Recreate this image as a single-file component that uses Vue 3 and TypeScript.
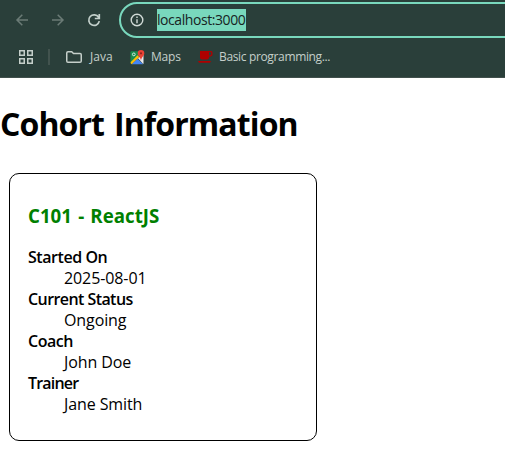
<script setup lang="ts">
interface Detail {
  term: string
  value: string
  key: string
}

const details: Detail[] = [
  { term: 'Started On', value: '2025-08-01', key: 'started' },
  { term: 'Current Status', value: 'Ongoing', key: 'status' },
  { term: 'Coach', value: 'John Doe', key: 'coach' },
  { term: 'Trainer', value: 'Jane Smith', key: 'trainer' },
]
</script>

<template>
  <div class="window">
    <header class="chrome">
      <div class="toolbar">
        <svg class="nav back" width="16" height="16" viewBox="0 0 16 16"><path d="M14 8H3M8.300 2.700 3 8l5.300 5.300" /></svg>
        <svg class="nav forward" width="16" height="16" viewBox="0 0 16 16"><path d="M2 8h11M7.700 2.700 13 8l-5.300 5.300" /></svg>
        <svg class="nav reload" width="16" height="16" viewBox="0 0 16 16">
          <path d="M12.600 5.300A5.300 5.300 0 1 0 13.300 9.200M13.300 2v4.500H8.800" />
        </svg>
        <div class="address">
          <svg class="info" width="14" height="14" viewBox="0 0 14 14">
            <circle cx="7" cy="7" r="5.800" />
            <path d="M7 6.300v4M7 3.500v1.500" />
          </svg>
          <span class="url">localhost:3000</span>
        </div>
      </div>
      <nav class="bookmarks">
        <svg class="apps" width="14" height="14" viewBox="0 0 14 14">
          <path d="M.75.75h4.500v4.500h-4.500zM8.750.75h4.500v4.500h-4.500zM.75 8.750h4.500v4.500h-4.500zM8.750 8.750h4.500v4.500h-4.500z" />
        </svg>
        <i class="divider"></i>
        <svg class="folder" width="16" height="12" viewBox="0 0 16 12">
          <path d="M.75 10V2Q.75.75 2 .75h3.700L7.500 2.500H14q1.250 0 1.250 1.250V10q0 1.250-1.250 1.250H2Q.75 11.250.75 10z" />
        </svg>
        <span class="label java">Java</span>
        <svg class="maps" width="15" height="15" viewBox="0 0 15 15">
          <path fill="#188c4c" d="M1.500 1.200H9V6L1 13.500Q.5 13.500.5 12.500V2.200q0-1 1-1z" />
          <path fill="#fbbc04" d="M.6 12.200 7.500 5.300l1.800 1.800-7.300 7.200Q.6 14.300.6 12.200z" />
          <path fill="#4285f4" d="m1.800 14.300 5.700-5.600 5.700 5.600z" />
          <path fill="#e8eaed" d="m8 8.300 5.500-4v9q0 .6-.3.800z" />
          <circle cx="3.800" cy="4.400" r="1.400" fill="none" stroke="#d5eadf" />
          <path fill="#ea4335" d="M11 0a3.300 3.300 0 0 0-3.300 3.300C7.700 6 10.500 7 11 10.500c.5-3.500 3.300-4.500 3.300-7.200A3.300 3.300 0 0 0 11 0z" />
          <circle cx="11" cy="3.300" r="1.100" fill="#8c2520" />
        </svg>
        <span class="label map-label">Maps</span>
        <svg class="cup" width="15" height="12" viewBox="0 0 15 12">
          <path fill="#b00000" fill-rule="evenodd" d="M2 0h11q1.500 0 1.500 1.500v2q0 2-3.500 2.300v.7q0 2-2 2H4q-2 0-2-2zm9 1.300v3.200q2.200-.1 2.200-1.200V1.300zM0 10h13l-1 1.800H1z" />
        </svg>
        <span class="label basic">Basic programming...</span>
      </nav>
    </header>
    <main>
      <h1>Cohort Information</h1>
      <section class="card">
        <h3>C101 - ReactJS</h3>
        <dl>
          <template v-for="item in details" :key="item.key">
            <dt :class="item.key">{{ item.term }}</dt>
            <dd>{{ item.value }}</dd>
          </template>
        </dl>
      </section>
    </main>
  </div>
</template>

<style>
body {
  margin: 0;
  background: #fff;
}
</style>

<style scoped>
.window {
  width: 505px;
  height: 468px;
  overflow: hidden;
  font-family: "Open Sans", "Noto Sans", sans-serif;
  color: #000;
}
svg {
  display: block;
  flex: none;
}
.chrome {
  box-sizing: border-box;
  height: 78px;
  background: #2a3f3a;
  border-bottom: 1px solid #41504c;
  overflow: hidden;
}
.toolbar {
  display: flex;
  align-items: center;
  height: 40px;
  padding-left: 14px;
}
.nav {
  fill: none;
  stroke: #6b7b76;
  stroke-width: 1.5;
}
.forward {
  margin-left: 20px;
}
.reload {
  margin-left: 20px;
  stroke: #c3d0cb;
  stroke-width: 1.7;
}
.address {
  box-sizing: border-box;
  display: flex;
  align-items: center;
  flex: none;
  width: 420px;
  height: 36px;
  margin-left: 17px;
  padding-left: 9px;
  border: 2px solid #79d8bd;
  border-radius: 18px;
}
.info {
  fill: none;
  stroke: #d0dad6;
  stroke-width: 1.4;
}
.url {
  box-sizing: border-box;
  width: 89px;
  height: 22px;
  margin-left: 13px;
  background: #79d8bd;
  color: #17231f;
  font-size: 14px;
  line-height: 21px;
  white-space: nowrap;
  letter-spacing: -0.43px;
}
.bookmarks {
  display: flex;
  align-items: center;
  height: 34px;
  padding-left: 19px;
}
.apps,
.folder {
  fill: none;
  stroke: #c5cfca;
  stroke-width: 1.5;
}
.divider {
  width: 2px;
  height: 16px;
  margin: 0 16px 0 15px;
  background: #42534e;
}
.label {
  flex: none;
  color: #c5cfca;
  font-size: 12px;
  line-height: 16px;
  white-space: nowrap;
}
.java {
  width: 40px;
  margin-left: 8px;
}
.map-label {
  width: 47px;
  margin-left: 6px;
  letter-spacing: -0.2px;
}
.basic {
  margin-left: 6px;
  letter-spacing: -0.35px;
}
h1 {
  margin: 24px 0 28px;
  font-size: 32px;
  line-height: 43px;
  font-weight: 700;
  letter-spacing: -0.9px;
  word-spacing: 2.5px;
}
.card {
  box-sizing: border-box;
  width: 308px;
  height: 268px;
  margin-left: 9px;
  padding: 29px 18px 0;
  border: 1px solid #000;
  border-radius: 10px;
}
h3 {
  margin: 0 0 19px;
  color: #008000;
  font-size: 18.72px;
  line-height: 25px;
  word-spacing: 1.3px;
}
dl {
  margin: 0;
  font-size: 16px;
  line-height: 21px;
}
dt {
  font-weight: 600;
  letter-spacing: -0.45px;
}
dt.status {
  letter-spacing: -0.57px;
}
dt.trainer {
  letter-spacing: -0.8px;
}
dd {
  margin-left: 36px;
  letter-spacing: -0.1px;
}
</style>
